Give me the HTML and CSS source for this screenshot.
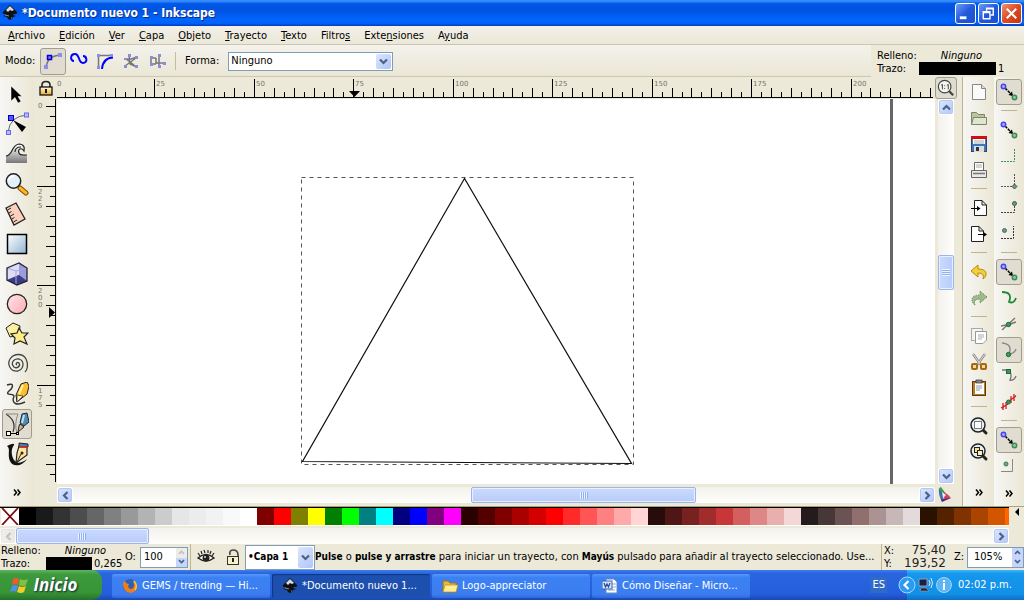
FILE: index.html
```html
<!DOCTYPE html>
<html lang="es">
<head>
<meta charset="utf-8">
<title>*Documento nuevo 1 - Inkscape</title>
<link rel="stylesheet" href="styles.css">
</head>
<body>
<svg class="defs" aria-hidden="true">
  <defs>
    <linearGradient id="gGold" x1="0" y1="0" x2="0" y2="1"><stop offset="0" stop-color="#fffbe0"/><stop offset="1" stop-color="#f2a81e"/></linearGradient>
    <linearGradient id="gBlue" x1="0" y1="0" x2="1" y2="1"><stop offset="0" stop-color="#fff"/><stop offset="1" stop-color="#8fb3d3"/></linearGradient>
    <linearGradient id="gPink" x1="0" y1="0" x2="1" y2="1"><stop offset="0" stop-color="#ffe6e8"/><stop offset="1" stop-color="#ffa9b5"/></linearGradient>
    <linearGradient id="gGrey" x1="0" y1="0" x2="0" y2="1"><stop offset="0" stop-color="#fff"/><stop offset="1" stop-color="#777"/></linearGradient>
    <symbol id="logo" viewBox="0 0 16 16"><path d="M8 0 L15 7 Q16 9 12 9 L11 10 L14 11 L11 12 L10 14 L8 15 L6 14 L5 12 L1 11 L4 10 L3 9 Q0 9 1 7Z" fill="#111"/><path d="M8 1 L12 5 L10 6 L8 5 L6 7 L4 5Z" fill="#d5dbe3"/><path d="M3 10 L7 11 M9 13 L10 13" stroke="#8a929c"/></symbol>
    <symbol id="chev" viewBox="0 0 9 7"><path d="M1 1.5 L4.500 5 L8 1.500" fill="none" stroke="#4d6185" stroke-width="2.200"/></symbol>
    <symbol id="nodes" viewBox="0 0 20 20"><path d="M6 6 L13 13" stroke="#000" stroke-width="1.500" stroke-dasharray="3 1"/><path d="M14 14 L9.500 13 L13 9.500Z" fill="#000"/><circle cx="4.500" cy="4.500" r="2.200" fill="#a9a9ff" stroke="#4444ee" stroke-width="1.500"/><circle cx="15.500" cy="15.500" r="2.200" fill="#8fc9a0" stroke="#3f8a55" stroke-width="1.500"/></symbol>
    <symbol id="mag" viewBox="0 0 20 20"><path d="M13 13 L17 17" stroke="#222" stroke-width="3" stroke-linecap="round"/><circle cx="9" cy="9" r="7" fill="#e4eff8" stroke="#222" stroke-width="1.500"/></symbol>
    <symbol id="chevs" viewBox="0 0 8 7"><path d="M1 0.500 L3.500 3.500 L1 6.500 M4.500 0.500 L7 3.500 L4.500 6.500" fill="none" stroke="#000" stroke-width="1.500"/></symbol>
  </defs>
</svg>
<div class="app">
  <header class="titlebar">
    <svg class="i16"><use href="#logo"/></svg>
    <h1 class="title">*Documento nuevo 1 - Inkscape</h1>
    <button class="win" aria-label="Minimizar"><svg viewBox="0 0 20 20"><path d="M4 13h7v3H4z" fill="#fff"/></svg></button>
    <button class="win" aria-label="Restaurar"><svg viewBox="0 0 20 20"><path d="M8 7V4.500H15V11.500H12.500 M8 5H15 M4.500 8H11.500V15.500H4.500Z M4.500 9H11.500" fill="none" stroke="#fff" stroke-width="1.500"/></svg></button>
    <button class="win close" aria-label="Cerrar"><svg viewBox="0 0 20 20"><path d="M5 5L15 15M15 5L5 15" stroke="#fff" stroke-width="2.200"/></svg></button>
  </header>

  <nav class="menubar">
    <a href="#"><u>A</u>rchivo</a><a href="#"><u>E</u>dición</a><a href="#"><u>V</u>er</a><a href="#"><u>C</u>apa</a><a href="#"><u>O</u>bjeto</a><a href="#"><u>T</u>rayecto</a><a href="#"><u>T</u>exto</a><a href="#">Filtro<u>s</u></a><a href="#">Exte<u>n</u>siones</a><a href="#">A<u>y</u>uda</a>
  </nav>

  <div class="optionbar">
    <div class="options">
      <span class="modo">Modo:</span>
      <button class="tb on" aria-label="Trayecto Bézier"><svg viewBox="0 0 20 20"><path d="M3 17 Q4 5 17 4" fill="none" stroke="#777" stroke-width="1.500"/><rect x="1" y="14" width="4" height="4" fill="#8c8cf0"/><rect x="15" y="2" width="4" height="4" fill="#8c8cf0"/><rect x="4.500" y="4.500" width="4" height="4" fill="#77f" stroke="#0000d0" stroke-width="1.500"/></svg></button>
      <button class="tb" aria-label="Spiro"><svg viewBox="0 0 20 20"><path d="M5 10 C1 10 1 3 6 3 C11 3 9 12 14 12 C19 12 18 5 14 5" fill="none" stroke="#00f" stroke-width="2"/></svg></button>
      <button class="tb" aria-label="BSpline"><svg viewBox="0 0 20 20"><path d="M3.500 17V4.500H17" fill="none" stroke="#777" stroke-width="1.500"/><path d="M7 18 Q8 7 18 6.500" fill="none" stroke="#00f" stroke-width="2"/><path d="M2 3h3v3H2zM15 3h3v2h-3zM2 15h3v3H2z" fill="#8c8cf0"/></svg></button>
      <button class="tb" aria-label="Líneas rectas"><svg viewBox="0 0 20 20"><path d="M8 4L9 13L16 16M4 8H10L16 6M4 15L15 7M5 8L13 14" fill="none" stroke="#777" stroke-width="1.400"/><path d="M7 3h3v3H7zM14 5h3v3h-3zM14 14h3v3h-3zM3 14h3v3H3zM3 7h3v2H3z" fill="#8c8cd8"/></svg></button>
      <button class="tb" aria-label="Líneas paraxiales"><svg viewBox="0 0 20 20"><path d="M4 7H9M9 7V13M4 13H9M12 4V16M9 12H18M4 7V13" fill="none" stroke="#777" stroke-width="1.500"/><path d="M3 5h3v3H3zM3 12h3v3H3zM11 3h3v3h-3zM11 14h3v3h-3zM16 11h3v3h-3z" fill="#8c8cd8"/></svg></button>
      <span class="vsep"></span>
      <label class="forma" for="forma">Forma:</label>
      <span class="combo wide"><select id="forma"><option>Ninguno</option></select><span class="drop"><svg><use href="#chev"/></svg></span></span>
    </div>
    <div class="style top">
      <span>Relleno:</span><i>Ninguno</i>
      <span>Trazo:</span><span class="stroke"></span><span>1</span>
    </div>
  </div>

  <main class="work">
    <div class="toolbox">
      <button class="tool" aria-label="Selector"><svg viewBox="0 0 24 24"><path d="M6 4V19L10 15.500L13 21L16 19.500L13 14.500H17Z" fill="#000" stroke="#fff" stroke-width=".500"/></svg></button>
      <button class="tool" aria-label="Nodos"><svg viewBox="0 0 24 24"><path d="M3 20 Q5 4 22 3" fill="none" stroke="#666"/><rect x="1.500" y="18.500" width="4" height="4" fill="#bbf" stroke="#66e"/><rect x="19.500" y="1" width="4" height="4" fill="#bbf" stroke="#66e"/><rect x="3.500" y="3.500" width="5" height="5" fill="#55f" stroke="#00c"/><path d="M8 8L21 15L17 20Z" fill="#000"/></svg></button>
      <button class="tool" aria-label="Retocar"><svg viewBox="0 0 24 24"><path d="M1 21V14C8 14 6 3 14 3C18 3 20 6 18 9C17 6 13 7 14 11C15 14 19 14 22 14V21Z" fill="url(#gGrey)"/><path d="M1 14C8 14 6 3 14 2C19 2 20 6 19 9C17 5 12 7 14 11C15 14 19 13 22 13M10 10Q10 5 16 5" fill="none" stroke="#222" stroke-width="1.200"/></svg></button>
      <button class="tool" aria-label="Zoom"><svg viewBox="0 0 24 24"><path d="M15 16L21 21" stroke="#7b4a00" stroke-width="5" stroke-linecap="round"/><path d="M15 16L21 21" stroke="#ffb52b" stroke-width="3" stroke-linecap="round"/><circle cx="8.500" cy="9" r="7.200" fill="#e3f0fa" stroke="#222" stroke-width="1.500"/><path d="M4 8Q5 4 9 4" stroke="#fff" stroke-width="2" fill="none"/></svg></button>
      <button class="tool" aria-label="Medir"><svg viewBox="0 0 24 24"><path d="M1 6L11 1L20 17L9 23Z" fill="#fcd0bd" stroke="#222" stroke-width="1.300"/><path d="M2.500 8L6 6M4 11L6.500 9.500M5.500 14L9 12M7 17L9.500 15.500M8.500 20L12 18" stroke="#222"/></svg></button>
      <button class="tool" aria-label="Rectángulo"><svg viewBox="0 0 24 24"><rect x="2.500" y="2.500" width="19" height="19" fill="url(#gBlue)" stroke="#000" stroke-width="1.500"/></svg></button>
      <button class="tool" aria-label="Caja 3D"><svg viewBox="0 0 24 24"><path d="M2 6L14 1L22 6V19L12 23L2 18Z" fill="#8888c8"/><path d="M2 6L14 1V13L2 18Z" fill="#dcdcf6"/><path d="M14 1L22 6V19L14 13Z" fill="#9c9cdc"/><path d="M2 18L14 13L22 19L12 23Z" fill="#3b3b86"/><path d="M2 6L11 9L22 6M11 9V22" fill="none" stroke="#a8a8dc"/><path d="M2 6L14 1L22 6V19L12 23L2 18Z" fill="none" stroke="#223" stroke-width="1.300"/></svg></button>
      <button class="tool" aria-label="Elipse"><svg viewBox="0 0 24 24"><circle cx="12" cy="12" r="9.700" fill="url(#gPink)" stroke="#222" stroke-width="1.300"/></svg></button>
      <button class="tool" aria-label="Estrella"><svg viewBox="0 0 24 24"><path d="M1 6L8 1L15 4L14 13L5 15Z" fill="#fff0a0" stroke="#222"/><path d="M14 6L17 11L23 11L19 15L22 22L15 19L9 22L10 16L6 12L12 11Z" fill="#ffee88" stroke="#222" stroke-width="1.200"/></svg></button>
      <button class="tool" aria-label="Espiral"><svg viewBox="0 0 24 24"><path d="M12 13C10 12 12 9.500 14 11C16 14 12 17 9 15C5 11 9 6 14 7C20 9 19 17 13 19C5 20 2 12 5 7C9 1 18 1 21 7C24 13 22 18 20 20" fill="none" stroke="#444" stroke-width="1.300"/></svg></button>
      <button class="tool" aria-label="Lápiz"><svg viewBox="0 0 24 24"><path d="M2 3C10 0 8 6 4 9C-1 14 9 11 9 14C6 22 12 24 20 20" fill="none" stroke="#333" stroke-width="1.400"/><path d="M16 2L22 0L24 4L22 12L12 20L11 13Z" fill="#ffbd2e" stroke="#222"/><path d="M12 13L18 14L12 20Z" fill="#fff2cf" stroke="#222" stroke-width=".700"/><path d="M18 3L14 12" stroke="#fff3a5" stroke-width="2"/></svg></button>
      <button class="tool on" aria-label="Pluma"><svg viewBox="0 0 24 24"><path d="M1 2Q12 9 8 20" fill="none" stroke="#333" stroke-width="1.200"/><path d="M1 2H13Q9 12 12 21" fill="none" stroke="#888"/><path d="M17 2L22 1L24 10L19 14L15 11Z" fill="#4e8cba" stroke="#222"/><path d="M19 3L17 11" stroke="#b7e0f5" stroke-width="2"/><path d="M15 12L19 15L13 20L14 14Z" fill="#d1b787" stroke="#222"/><path d="M4 21.500H12" stroke="#000"/><rect x="1.500" y="19.500" width="4" height="4" fill="#fff" stroke="#000"/><rect x="11.500" y="20.500" width="2" height="2" fill="#fff" stroke="#000"/></svg></button>
      <button class="tool" aria-label="Caligrafía"><svg viewBox="0 0 24 24"><path d="M2 4Q10 0 9 3C5 8 7 15 9 18Q13 24 22 17C17 25 7 25 5 19C2 12 6 7 2 4Z" fill="#111"/><path d="M14 4L22 3L22 13L11 21L12 11Z" fill="#ffe49b" stroke="#222" stroke-width="1.200"/><path d="M14 1L23 2V5L14 5Z" fill="#3c85a3" stroke="#222"/><path d="M14 5H23" stroke="#d22" stroke-width="1.500"/><path d="M12 20L16 12" stroke="#222"/><circle cx="17" cy="11" r="1.500" fill="#222"/></svg></button>
      <button class="more" aria-label="Más herramientas"><svg><use href="#chevs"/></svg></button>
    </div>

    <section class="editor">
      <div class="corner"><svg viewBox="0 0 16 16"><path d="M4 8V5Q4 1.500 8 1.500Q12 1.500 12 5V8" fill="none" stroke="#222" stroke-width="1.600"/><rect x="2" y="7" width="12" height="8" fill="url(#gGold)" stroke="#111" stroke-width="1.300"/><path d="M7 9h2v4H7zM6 10h4" fill="#111"/></svg></div>
      <svg class="ruler-h" id="rulerH"></svg>
      <button class="zoomfix on" aria-label="Ajustar zoom"><svg viewBox="0 0 20 20"><path d="M13 13L18 18" stroke="#444" stroke-width="2.500"/><circle cx="8.500" cy="8.500" r="7" fill="#f4f4f0" stroke="#444" stroke-width="1.300"/><path d="M4.500 7L6 6V11.500M11 7L12.500 6V11.500M8.500 7V8M8.500 10V11" fill="none" stroke="#333"/></svg></button>
      <svg class="ruler-v" id="rulerV"></svg>
      <svg class="canvas">
        <rect x="833" y="0" width="3" height="100%" fill="#666"/>
        <rect x="244.500" y="78.500" width="332" height="287" fill="none" stroke="#555" stroke-dasharray="4 4"/>
        <path d="M407.500 79.500L245.500 362.500L574.500 364.500Z" fill="none" stroke="#111" stroke-width="1.200"/>
      </svg>
      <div class="scroll v">
        <button class="sb" aria-label="Arriba"><svg class="up"><use href="#chev"/></svg></button>
        <div class="track"><div class="thumb" style="top:39.6%;height:10%"></div></div>
        <button class="sb" aria-label="Abajo"><svg><use href="#chev"/></svg></button>
      </div>
      <div class="scroll h main-h">
        <button class="sb" aria-label="Izquierda"><svg class="left"><use href="#chev"/></svg></button>
        <div class="track"><div class="thumb" style="left:47.1%;width:26.6%"></div></div>
        <button class="sb" aria-label="Derecha"><svg class="right"><use href="#chev"/></svg></button>
      </div>
      <button class="cms" aria-label="Gestión de color"><svg viewBox="0 0 16 16"><path d="M2 1L4 0L9 7L6 9Z" fill="#3f9f4a"/><path d="M2 1L7 9L5 15Q1 7 2 1Z" fill="#3a6fb0"/><path d="M7 5Q12 8 14 11L8 13L6 8Z" fill="#d0405a"/><path d="M4 12L14 11L5 15Z" fill="#5a2a80"/><path d="M5 5L9 8L6 11Z" fill="#e8f0e8"/></svg></button>
    </section>

    <div class="cmds">
      <button class="cmd" aria-label="Nuevo"><svg viewBox="0 0 20 20"><path d="M3.500 2.500H12.500L16.500 6.500V17.500H3.500Z" fill="#fafafa" stroke="#888"/><path d="M12.500 2.500V6.500H16.500" fill="#ddd" stroke="#888"/></svg></button>
      <button class="cmd" aria-label="Abrir"><svg viewBox="0 0 20 20"><path d="M2.500 16.500V4.500H7.500L9.500 6.500H15.500V9.500" fill="#b9c4a0" stroke="#7b8766"/><path d="M4.500 9.500H17.500V16.500H2.500Z" fill="#dfe5cf" stroke="#7b8766"/></svg></button>
      <button class="cmd" aria-label="Guardar"><svg viewBox="0 0 20 20"><rect x="2.500" y="2.500" width="15" height="15" fill="#3e78b8" stroke="#24466f"/><rect x="4" y="3" width="12" height="7" fill="#fff"/><rect x="2" y="2" width="16" height="3" fill="#d01010"/><path d="M5 7H15M5 9H15" stroke="#aaa"/><rect x="5" y="12" width="10" height="6" fill="#ddd"/><rect x="7" y="13" width="3" height="4" fill="#333"/></svg></button>
      <button class="cmd" aria-label="Imprimir"><svg viewBox="0 0 20 20"><path d="M5.500 10V2.500H14.500V10" fill="#fff" stroke="#666"/><path d="M7 5H13M7 7H13" stroke="#aaa"/><path d="M2.500 10.500H17.500V17.500H2.500Z" fill="#e8e8e8" stroke="#666"/><path d="M4 13.500H16" stroke="#777" stroke-width="1.500"/></svg></button>
      <hr>
      <button class="cmd" aria-label="Importar"><svg viewBox="0 0 20 20"><path d="M5.500 2.500H13L17.500 7V17.500H5.500Z M13 2.500V7H17.500" fill="#fff" stroke="#222"/><path d="M2 10.500H9" stroke="#000"/><path d="M8 8L11.500 10.500L8 13Z" fill="#000"/></svg></button>
      <button class="cmd" aria-label="Exportar"><svg viewBox="0 0 20 20"><path d="M2.500 2.500H10L14.500 7V17.500H2.500Z M10 2.500V7H14.500" fill="#fff" stroke="#222"/><path d="M9 10.500H15" stroke="#000"/><path d="M14.500 8L18 10.500L14.500 13Z" fill="#000"/></svg></button>
      <hr>
      <button class="cmd" aria-label="Deshacer"><svg viewBox="0 0 20 20"><path d="M2 9L9 3V7Q18 7 17 13Q16 16 14 17Q16 11 9 11V15Z" fill="#f4cf3a" stroke="#b68b10"/></svg></button>
      <button class="cmd" aria-label="Rehacer"><svg viewBox="0 0 20 20"><path d="M18 9L11 3V7Q2 7 3 13Q4 16 6 17Q4 11 11 11V15Z" fill="#9dba8a" stroke="#5f8652" stroke-dasharray="1 1"/></svg></button>
      <hr>
      <button class="cmd" aria-label="Copiar"><svg viewBox="0 0 20 20"><rect x="2.500" y="2.500" width="11" height="12" fill="#f4f4f0" stroke="#aaa"/><path d="M6.500 5.500H17.500V14L14 17.500H6.500Z" fill="#fff" stroke="#999"/><path d="M9 9H15M9 11H15M9 13H13" stroke="#aaa"/></svg></button>
      <button class="cmd" aria-label="Cortar"><svg viewBox="0 0 20 20"><path d="M4 2L12 13M16 2L8 13" stroke="#888" stroke-width="2.400"/><path d="M4 2L12 13M16 2L8 13" stroke="#ddd"/><rect x="3" y="12" width="5" height="5" rx="1" fill="#f5d59a" stroke="#a8690c" stroke-width="2"/><rect x="12" y="12" width="5" height="5" rx="1" fill="#f5d59a" stroke="#a8690c" stroke-width="2"/></svg></button>
      <button class="cmd" aria-label="Pegar"><svg viewBox="0 0 20 20"><rect x="3.500" y="3.500" width="13" height="14" fill="#b97a24" stroke="#5f3c0c"/><rect x="6" y="5" width="9" height="11" fill="#fff"/><rect x="7" y="2" width="6" height="3" fill="#888" stroke="#333" stroke-width=".700"/><path d="M7 8H13M7 10H13M7 12H11" stroke="#999"/></svg></button>
      <hr>
      <button class="cmd" aria-label="Zoom a selección"><svg viewBox="0 0 20 20"><use href="#mag"/><rect x="5.500" y="5.500" width="7" height="7" fill="#fff" stroke="#000" stroke-dasharray="1 1"/></svg></button>
      <button class="cmd" aria-label="Zoom a dibujo"><svg viewBox="0 0 20 20"><use href="#mag"/><rect x="5.500" y="5.500" width="5" height="5" fill="#ffdf8a" stroke="#222"/><rect x="8.500" y="8.500" width="5" height="5" fill="#ffedb8" stroke="#222"/></svg></button>
      <button class="more" aria-label="Más órdenes"><svg><use href="#chevs"/></svg></button>
    </div>

    <div class="snaps">
      <button class="cmd on" aria-label="Ajuste"><svg><use href="#nodes"/></svg></button>
      <hr>
      <button class="cmd" aria-label="Ajustar cajas"><svg><use href="#nodes"/></svg></button>
      <button class="cmd" aria-label="Bordes de caja"><svg viewBox="0 0 20 20"><path d="M2 15.500H15.500V2" fill="none" stroke="#4b8a58" stroke-dasharray="2 1"/></svg></button>
      <button class="cmd" aria-label="Esquinas"><svg viewBox="0 0 20 20"><path d="M2 14.500H15.500V2" fill="none" stroke="#555" stroke-dasharray="2 1"/><path d="M15.500 12L18 14.500L15.500 17L13 14.500Z" fill="#6f9e77" stroke="#456"/></svg></button>
      <button class="cmd" aria-label="Puntos medios de bordes"><svg viewBox="0 0 20 20"><path d="M2 14.500H15.500V5" fill="none" stroke="#444" stroke-dasharray="2 1"/><circle cx="15.500" cy="5.500" r="2" fill="#5da36b" stroke="#456"/></svg></button>
      <button class="cmd" aria-label="Centros de cajas"><svg viewBox="0 0 20 20"><path d="M2 14.500H14.500V2" fill="none" stroke="#333" stroke-dasharray="2 1"/><circle cx="5.500" cy="6.500" r="2" fill="#5da36b" stroke="#567"/></svg></button>
      <hr>
      <button class="cmd on" aria-label="Ajustar nodos"><svg><use href="#nodes"/></svg></button>
      <button class="cmd" aria-label="Ajustar a trayectos"><svg viewBox="0 0 20 20"><path d="M3 4Q14 4 10 14Q15 16 17 10" fill="none" stroke="#1e8a35" stroke-width="1.800"/></svg></button>
      <button class="cmd" aria-label="Intersecciones"><svg viewBox="0 0 20 20"><path d="M3 16L16 4M2 12Q10 11 17 8" fill="none" stroke="#777" stroke-width="1.400"/><circle cx="9.500" cy="10.500" r="2.200" fill="#3b9a50" stroke="#264"/></svg></button>
      <button class="cmd on" aria-label="Nodos vértice"><svg viewBox="0 0 20 20"><path d="M3 3Q14 4 10 14Q15 14 17 9" fill="none" stroke="#888" stroke-width="1.400"/><circle cx="9.500" cy="14.500" r="2.200" fill="#3b9a50" stroke="#264"/></svg></button>
      <button class="cmd" aria-label="Nodos suaves"><svg viewBox="0 0 20 20"><path d="M3 4H9Q14 8 11 14Q15 15 17 10" fill="none" stroke="#777" stroke-width="1.400"/><rect x="7.500" y="3.500" width="4" height="4" fill="#3b9a50" stroke="#264"/></svg></button>
      <button class="cmd" aria-label="Puntos medios"><svg viewBox="0 0 20 20"><path d="M3 17L17 3" stroke="#999"/><path d="M4 11V18M7 10V17M2 16L9 12M12 4V11M15 2V9M10 9L17 4" stroke="#d02020" stroke-width="1.300"/><circle cx="9.500" cy="10" r="2" fill="#3b9a50" stroke="#264"/></svg></button>
      <hr>
      <button class="cmd on" aria-label="Ajustar otros"><svg><use href="#nodes"/></svg></button>
      <button class="cmd" aria-label="Centros de objetos"><svg viewBox="0 0 20 20"><path d="M2 15.500H13.500V3" fill="none" stroke="#888"/><circle cx="7" cy="8" r="2" fill="#6cae7a" stroke="#375"/></svg></button>
      <button class="more" aria-label="Más ajustes"><svg><use href="#chevs"/></svg></button>
    </div>
  </main>

  <section class="palette">
    <div class="swatches" id="swatches"><button class="none" aria-label="Ninguno"><svg viewBox="0 0 18 17"><path d="M1 0L17 17M17 0L1 17" stroke="#7a0a12" stroke-width="1.800"/></svg></button></div>
    <button class="pmenu" aria-label="Menú de paleta"><svg viewBox="0 0 6 8"><path d="M5 0V8L1 4Z"/></svg></button>
    <div class="scroll h">
      <button class="sb off" aria-label="Paleta a la izquierda"><svg class="left"><use href="#chev"/></svg></button>
      <div class="track"><div class="thumb" style="left:0;width:13.6%"></div></div>
      <button class="sb" aria-label="Paleta a la derecha"><svg class="right"><use href="#chev"/></svg></button>
    </div>
  </section>

  <footer class="status">
    <div class="style">
      <span>Relleno:</span><i class="span2">Ninguno</i>
      <span>Trazo:</span><span class="stroke"></span><span>0,265</span>
    </div>
    <label for="opac" class="lab">O:</label>
    <span class="spin"><input id="opac" type="text" value="100"><span class="arrows half"><svg class="up"><use href="#chev"/></svg><svg><use href="#chev"/></svg></span></span>
    <span class="vline"></span>
    <button class="eye" aria-label="Visibilidad de la capa"><svg viewBox="0 0 18 16"><path d="M1 9Q9 2 17 9Q9 15 1 9Z" fill="#fff" stroke="#222" stroke-width="1.500"/><circle cx="9" cy="9" r="3.500" fill="#222"/><circle cx="8" cy="8" r="1" fill="#ddd"/><path d="M3 7L1 4M5 5L4 2M8 4L7 1M11 4V1M13 5L14 2M15 7L17 4" stroke="#222" stroke-width="1.200"/></svg></button>
    <button class="lock" aria-label="Bloquear capa"><svg viewBox="0 0 14 16"><path d="M4 6Q3 1 7 1Q12 1 12 6V9" fill="none" stroke="#444" stroke-width="1.600"/><rect x="1.500" y="7.500" width="11" height="8" fill="#f8f0c8" stroke="#333"/><path d="M6 9h2v4H6z" fill="#222"/></svg></button>
    <span class="combo layer"><select id="capa" aria-label="Capa"><option>•Capa 1</option></select><span class="drop"><svg><use href="#chev"/></svg></span></span>
    <p class="msg"><b>Pulse</b> o <b>pulse y arrastre</b> para iniciar un trayecto, con <b>Mayús</b> pulsado para añadir al trayecto seleccionado. Use...</p>
    <div class="coords"><span>X:</span><span class="num">75,40</span><span>Y:</span><span class="num">193,52</span></div>
    <label for="zoom" class="lab z">Z:</label>
    <span class="spin zoom"><input id="zoom" type="text" value="105%"><span class="arrows"><svg class="up"><use href="#chev"/></svg><svg><use href="#chev"/></svg></span></span>
  </footer>

  <nav class="taskbar">
    <button class="start"><svg viewBox="0 0 20 20"><path d="M3 4Q6 2 9 4L8 10Q5 8 2 10Z" fill="#f0592a"/><path d="M10 4Q14 6 18 4L16 10Q13 12 9 10Z" fill="#7ec242"/><path d="M2 11Q5 9 8 11L6 17Q4 15 0 17Z" fill="#4d8ff0"/><path d="M9 11Q12 13 16 11L14 17Q11 19 7 17Z" fill="#fbc927"/></svg>Inicio</button>
    <div class="tasks">
      <button class="task"><svg viewBox="0 0 16 16"><circle cx="8" cy="8" r="7" fill="#2b62b8"/><path d="M1 5Q2 3 3 3Q4 6 7 6Q5 9 8 11Q12 11 12 7L11 3Q16 6 15 10Q13 15 8 15Q1 14 1 5Z" fill="#f07c1a"/><path d="M12 3Q16 7 13 12" stroke="#ffc83a" fill="none" stroke-width="1.500"/></svg>GEMS / trending — Hi...</button>
      <button class="task active"><svg><use href="#logo"/></svg>*Documento nuevo 1...</button>
      <button class="task"><svg viewBox="0 0 16 16"><path d="M1 14V3H6L8 5H14V14Z" fill="#e7b93c" stroke="#9b7412"/><path d="M3 7H16L14 14H1Z" fill="#ffeb98" stroke="#b48d24" stroke-width=".700"/></svg>Logo-appreciator</button>
      <button class="task"><svg viewBox="0 0 16 16"><path d="M4 1H12L15 4V15H4Z" fill="#fff" stroke="#6a8abf"/><path d="M10 6H14M10 9H14M6 12H13" stroke="#8aa5d8"/><rect x="0" y="3" width="10" height="8" fill="#d9e5fa" stroke="#3762b0"/><path d="M2 5L3.500 9L5 6L6.500 9L8 5" fill="none" stroke="#2450a8" stroke-width="1.300"/></svg>Cómo Diseñar - Micro...</button>
    </div>
    <span class="lang">ES</span>
    <div class="tray">
      <button class="hide" aria-label="Ocultar iconos"><svg viewBox="0 0 18 18"><circle cx="9" cy="9" r="8" fill="#2b9af0" stroke="#9fdcff"/><path d="M10.500 5L6.500 9L10.500 13" fill="none" stroke="#fff" stroke-width="2.200"/></svg></button>
      <svg class="net" viewBox="0 0 18 18"><rect x="2" y="3" width="8" height="7" fill="#15204f" stroke="#99a"/><path d="M4 12H9L12 15H3Z" fill="#223" stroke="#99a" stroke-width=".700"/><path d="M12 4Q14 7 12 10M14 2Q17 7 14 12" fill="none" stroke="#e8e8e8"/></svg>
      <svg class="info" viewBox="0 0 18 18"><circle cx="9" cy="9" r="7.500" fill="#5cb4f2" stroke="#9bd6ff"/><path d="M8 4h2v2H8zM8 7h2v7H8z" fill="#fff"/></svg>
      <time>02:02 p.m.</time>
    </div>
  </nav>
</div>
<script src="app.js"></script>
</body>
</html>
```
FILE: styles.css
```css
* { box-sizing: border-box; }
body {
  margin: 0;
  background: #ece9d8;
  color: #000;
  font: 11px/14px "DejaVu Sans Condensed", Tahoma, "DejaVu Sans", sans-serif;
}
button { font: inherit; border: 0; padding: 0; margin: 0; background: none; display: flex; align-items: center; justify-content: center; flex: none; }
svg { display: block; flex: none; }
.defs { position: absolute; width: 0; height: 0; }
.app { display: flex; flex-direction: column; height: 100vh; min-height: 600px; overflow: hidden; }

.titlebar {
  display: flex; align-items: center; gap: 2px; height: 26px; padding: 0 2px;
  background: linear-gradient(#2f86ff 0, #3a92ff 4%, #0058e6 14%, #0053e0 40%, #0066ff 75%, #0060f8 90%, #003cc0 100%);
}
.i16 { width: 16px; height: 16px; }
.title { flex: 1; margin: 0; padding-left: 2px; color: #fff; font: bold 12px/20px "DejaVu Sans Condensed", sans-serif; text-shadow: 1px 1px #0a2a80; }
.win { width: 21px; height: 21px; border: 1px solid #fff; border-radius: 3px; background: linear-gradient(135deg, #6f9cf5, #2358dc 50%, #1c4fd0); }
.win svg { width: 19px; height: 19px; }
.win.close { background: linear-gradient(135deg, #f0906f, #dd4a24 50%, #c53410); }

.menubar { display: flex; gap: 14px; height: 19px; padding: 3px 8px 0; background: linear-gradient(#f2f1e8, #ebe8d9); border-bottom: 1px solid #cbc7b4; }
.menubar a { color: #000; text-decoration: none; }

.optionbar { display: flex; height: 32px; }
.options { flex: 1; display: flex; align-items: center; padding: 1px 5px 0; background: linear-gradient(#f3f2ec, #ebe7d5); border-bottom: 1px solid #cbc7b4; }
.modo { width: 35px; }
.tb { width: 26px; height: 27px; border: 1px solid transparent; border-radius: 3px; }
.tb svg { width: 20px; height: 20px; }
.on { border: 1px solid #a09d90; border-radius: 3px; background: #e0ddd0; }
.vsep { width: 1px; height: 18px; margin-left: 5px; background: #c5bd98; }
.forma { margin: 0 9px; }
.combo { position: relative; display: flex; flex: none; background: #fff; border: 1px solid #7f9db9; }
.combo select { appearance: none; width: 100%; border: 0; background: #fff; font: inherit; color: #000; padding: 0 2px; outline: 0; }
.wide { width: 165px; height: 19px; }
.drop { position: absolute; right: 1px; top: 1px; bottom: 1px; width: 15px; display: flex; align-items: center; justify-content: center; border-radius: 2px; background: linear-gradient(135deg, #dce6fe, #afc4f8); pointer-events: none; }
.drop svg { width: 9px; height: 7px; }

.style { display: grid; grid-template-columns: 43px 46px auto; column-gap: 2px; grid-template-rows: 13px 13px; line-height: 13px; align-content: center; }
.style i { grid-column: 2; text-align: center; white-space: nowrap; }
.style .span2 { grid-column: 2 / 4; }
.style .stroke { background: #000; }
.style.top { width: 153px; padding: 2px 0 0 6px; grid-template-columns: 40px 77px auto; }
.style.top i { padding-left: 8px; }
.style > span:nth-of-type(2) { grid-column: 1; }
.style > .stroke { grid-column: 2; }

.work { flex: 1; display: flex; min-height: 0; border-bottom: 1px solid #aca477; }
.toolbox { width: 34px; display: flex; flex-direction: column; align-items: center; padding: 2px 0 0; background: linear-gradient(90deg, #f6f6f4, #ebe7d5); }
.tool { width: 30px; height: 30px; border: 1px solid transparent; }
.tool svg { width: 24px; height: 24px; }
.tool.on { border-color: #a09d90; }
.more { margin-top: auto; width: 26px; height: 28px; }
.more svg { width: 8px; height: 7px; }

.editor { flex: 1; min-width: 0; display: grid; grid-template-columns: 23px 1fr 24px; grid-template-rows: 22px 1fr 22px; }
.corner { padding: 3px 0 0 4px; }
.corner svg { width: 16px; height: 16px; }
.ruler-h, .ruler-v, .canvas { width: 100%; height: 100%; overflow: hidden; }
.ruler-v { min-height: 0; }
.tick { fill: #000; }
.num-label { font: 7px "DejaVu Sans", sans-serif; fill: #77756a; }
.zoomfix { width: 22px; height: 22px; }
.zoomfix svg { width: 18px; height: 18px; }
.canvas { background: #fff; }
.cms { align-items: flex-start; padding: 3px 4px 0 0; }
.cms svg { width: 16px; height: 16px; }

.scroll { display: flex; min-width: 0; min-height: 0; }
.scroll .track { position: relative; flex: 1; }
.scroll.h { height: 16px; background: linear-gradient(#f3f1ec, #fefefb); }
.main-h { grid-column: 1 / 3; margin: 3px 0 0 23px; }
.scroll.v { width: 16px; margin-left: 3px; flex-direction: column; background: linear-gradient(90deg, #f3f1ec, #fefefb); }
.sb { width: 16px; height: 16px; border: 1px solid #fff; border-radius: 3px; background: linear-gradient(135deg, #dce6fe, #b3c8fa); box-shadow: inset 0 0 0 1px #b4c8f6; }
.sb svg { width: 9px; height: 7px; }
.sb.off { filter: grayscale(1) opacity(.35); }
.up { transform: rotate(180deg); }
.left { transform: rotate(90deg); }
.right { transform: rotate(-90deg); }
.thumb { position: absolute; display: flex; align-items: center; justify-content: center; border: 1px solid #9db5e8; border-radius: 2px; box-shadow: inset 0 0 0 1px #e8effe; }
.h .thumb { top: 0; bottom: 0; background: linear-gradient(#cbdafd, #b8ccfa); }
.v .thumb { left: 0; right: 0; background: linear-gradient(90deg, #cbdafd, #b8ccfa); }
.thumb::after { content: ""; width: 8px; height: 7px; background: repeating-linear-gradient(90deg, #eef4fe 0 1px, #8cb0f8 1px 2px); }
.v .thumb::after { background: repeating-linear-gradient(#eef4fe 0 1px, #8cb0f8 1px 2px); }

.cmds, .snaps { display: flex; flex-direction: column; align-items: center; padding-top: 2px; background: linear-gradient(90deg, #f6f6f4, #ebe7d5); }
.cmds { width: 31px; margin-left: 4px; box-shadow: -1px 0 #bdb58d; }
.snaps { width: 30px; }
.cmd { width: 26px; height: 26px; border: 1px solid transparent; }
.cmd.on { border-color: #a09d90; }
.cmd svg { width: 20px; height: 20px; }
.cmds hr, .snaps hr { width: 16px; height: 1px; flex: none; margin: 5px 0 6px; border: 0; background: #bdb58d; }

.palette { display: grid; grid-template-columns: 1fr 15px; grid-template-rows: 19px 16px; row-gap: 2px; }
.swatches { display: flex; height: 19px; overflow: hidden; padding-left: 1px; border-top: 1px solid #000; border-bottom: 1px solid #fff; }
.swatches button { width: 17px; height: 17px; }
.swatches .none { width: 18px; background: #fff; }
.none svg { width: 18px; height: 17px; }
.pmenu { padding-bottom: 9px; }
.pmenu svg { width: 6px; height: 8px; }

.status { display: flex; align-items: center; height: 26px; padding: 0 0 0 1px; }
.status .style { width: 124px; }
.lab { width: 15px; white-space: nowrap; }
.lab.z { width: 13px; }
.spin { display: flex; height: 21px; background: #fff; border: 1px solid #7f9db9; flex: none; }
.spin input { width: 35px; border: 0; padding: 0 0 0 3px; background: #fff; font: inherit; outline: 0; }
.arrows { width: 11px; display: flex; flex-direction: column; justify-content: space-around; align-items: center; background: #c5d5fc; }
.arrows svg { width: 7px; height: 5px; }
.half { background: linear-gradient(#eeede5 50%, #c5d5fc 50%); }
.half .up { opacity: .3; }
.spin.zoom input { width: 44px; padding-left: 6px; }
.vline { width: 1px; height: 26px; margin-left: 2px; background: #bdb58d; }
.eye { width: 30px; }
.eye svg { width: 18px; height: 16px; }
.lock { width: 24px; }
.lock svg { width: 14px; height: 16px; }
.layer { width: 70px; height: 25px; }
.layer select { font-weight: bold; font-size: 10px; }
.msg { flex: 1; min-width: 0; margin: 0; white-space: nowrap; overflow: hidden; }
.msg b { font-size: 10px; }
.coords { display: grid; grid-template-columns: 13px 49px; line-height: 13px; padding-left: 2px; margin-right: 8px; border-left: 1px solid #bdb58d; }
.coords .num { text-align: right; font: 12px/13px "DejaVu Sans", sans-serif; color: #222; }

.taskbar { display: flex; align-items: stretch; height: 30px; color: #fff; background: linear-gradient(#3a80ee 0, #2a66e0 10%, #245edb 80%, #1b47b5 100%); }
.start { width: 102px; gap: 4px; padding-right: 15px; border-radius: 0 10px 10px 0; color: #fff; font: italic bold 17px/28px "Open Sans", sans-serif; text-shadow: 1px 1px 2px #123; background: linear-gradient(#5fb35f 0, #3c9a3c 15%, #379537 75%, #25702a 100%); }
.start svg { width: 20px; height: 20px; }
.tasks { flex: 1; display: flex; gap: 2px; padding: 4px 0 2px 10px; }
.task { width: 158px; justify-content: flex-start; gap: 4px; padding-left: 10px; border-radius: 2px; color: #fff; white-space: nowrap; background: linear-gradient(#5a97fa, #3c81f3 15%, #3a7df0 85%, #2f68d8); }
.task.active { background: #1c4fae; box-shadow: inset 1px 1px 1px #12347c; }
.task svg { width: 16px; height: 16px; }
.lang { align-self: center; padding: 1px 2px; margin-right: 20px; background: #3169c6; }
.tray { display: flex; align-items: center; width: 117px; background: linear-gradient(#3cb8f6 0, #1597ec 12%, #1290e8 80%, #0d70c4 100%); }
.tray svg { width: 18px; height: 18px; }
.hide { margin-left: -9px; }
.net { margin-left: 1px; }
.tray time { margin-left: 5px; }
```
FILE: app.js
```js
const NS = "http://www.w3.org/2000/svg";
const STEP = 9.945; // one subdivision: 2.5 document units

function add(svg, name, attrs, text) {
  const el = document.createElementNS(NS, name);
  for (const key in attrs) el.setAttribute(key, attrs[key]);
  if (text) el.textContent = text;
  svg.appendChild(el);
}

function tickLength(i) {
  return i % 10 === 0 ? 18 : i % 2 === 0 ? 9 : 5;
}

const h = document.getElementById("rulerH");
const hw = h.clientWidth - 2;
add(h, "rect", { class: "tick", x: 0, y: 20, width: hw, height: 1 });
for (let i = 1; ; i++) {
  const x = Math.round(-2 + i * STEP);
  if (x > hw) break;
  const len = tickLength(i);
  add(h, "rect", { class: "tick", x: x, y: 20 - len, width: 1, height: len });
  if (i % 10 === 0) add(h, "text", { class: "num-label", x: x + 2, y: 9 }, String(i * 2.5));
}
add(h, "text", { class: "num-label", x: 0, y: 9 }, "0");
add(h, "path", { d: "M292 14H303L297.5 20Z" });

const v = document.getElementById("rulerV");
const vh = v.clientHeight - 2;
add(v, "rect", { class: "tick", x: 21, y: 0, width: 1, height: vh });
for (let i = -8; ; i++) {
  const y = Math.round(87 + i * STEP);
  if (y > vh) break;
  const len = tickLength(i);
  add(v, "rect", { class: "tick", x: 21 - len, y: y, width: len, height: 1 });
  if (i % 10 === 0) {
    String(225 - i * 2.5).split("").forEach((d, n) => {
      add(v, "text", { class: "num-label", x: 4, y: y + 8 + n * 7 }, d);
    });
  }
}
add(v, "text", { class: "num-label", x: 4, y: 9 }, "0");
add(v, "path", { d: "M15 208V219L21 213.5Z" });

const colors = ("000 1a1a1a 333 4d4d4d 666 808080 999 b3b3b3 ccc e6e6e6 ececec f2f2f2 f9f9f9 fff " +
  "800000 f00 808000 ff0 008000 0f0 008080 0ff 000080 00f 800080 f0f " +
  "2b0000 550000 800000 aa0000 d40000 f00 ff2a2a ff5555 ff8080 faa ffd5d5 " +
  "280b0b 501616 782121 a02c2c c83737 d35f5f de8787 e9afaf f4d7d7 " +
  "241c1c 483737 6c5353 916f6f ac9393 c8b7b7 e3dbdb 2b1100 552200 803300 a40 d45500 f60").split(" ");
const swatches = document.getElementById("swatches");
for (const c of colors) {
  const b = document.createElement("button");
  b.style.background = "#" + c;
  b.setAttribute("aria-label", "#" + c);
  swatches.appendChild(b);
}
```
